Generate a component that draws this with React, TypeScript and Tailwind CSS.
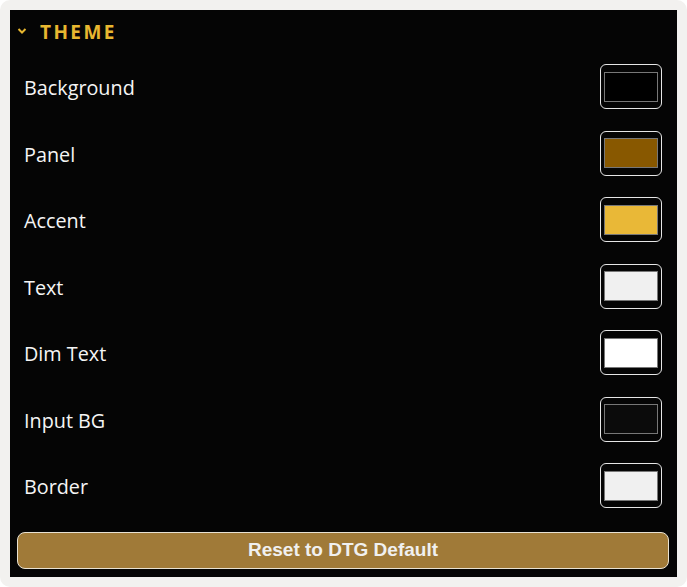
import React from 'react';

const SWATCHES = [
  { label: 'Background', color: '#000000' },
  { label: 'Panel', color: '#885800' },
  { label: 'Accent', color: '#e9b837' },
  { label: 'Text', color: '#f0f0f0' },
  { label: 'Dim Text', color: '#ffffff' },
  { label: 'Input BG', color: '#0b0b0b' },
  { label: 'Border', color: '#f0f0f0' },
];

export default function App() {
  return (
    <div className="w-[687px] h-[587px] bg-white">
      <div className="w-full h-full bg-[#f2f1ef] rounded-[10px] p-[10px]">
        <div className="h-full bg-[#050505] flex flex-col">
          {/* Header */}
          <div className="h-[44px] flex items-center pl-[7px]">
            <svg width="10" height="8" viewBox="0 0 10 8" className="mt-[-3px]">
              <polyline points="1.5,2 5,5.5 8.5,2" fill="none" stroke="#e8b730" strokeWidth="2" />
            </svg>
            <span
              className="ml-[13px] text-[19px] font-bold tracking-[2.4px] text-[#e8b730]"
              style={{ fontFamily: '"Open Sans", sans-serif' }}
            >
              THEME
            </span>
          </div>

          {/* Swatch rows */}
          <div className="mt-[10px] flex flex-col gap-[21.5px] pl-[14px] pr-[15px]">
            {SWATCHES.map((s) => (
              <div key={s.label} className="flex items-center justify-between h-[45px]">
                <span
                  className="text-[19.8px] text-[#f5f5f5] pt-[3px]"
                  style={{ fontFamily: '"Open Sans", sans-serif' }}
                >
                  {s.label}
                </span>
                <div className="w-[62px] h-[45px] rounded-[6px] border border-[#e6e6e6] flex items-center justify-center">
                  <div
                    className="w-[54px] h-[30px] border border-[#777777]"
                    style={{ backgroundColor: s.color }}
                  />
                </div>
              </div>
            ))}
          </div>

          {/* Reset */}
          <div className="mt-[24px] pl-[7px] pr-[8px]">
            <button
              className="w-full h-[37px] rounded-[8px] border border-[#e9e2d2] bg-[#a07a38] text-[19px] font-bold text-[#f0f0f0] flex items-center justify-center"
              style={{ fontFamily: '"Liberation Sans", Arial, sans-serif' }}
            >
              Reset to DTG Default
            </button>
          </div>
        </div>
      </div>
    </div>
  );
}
